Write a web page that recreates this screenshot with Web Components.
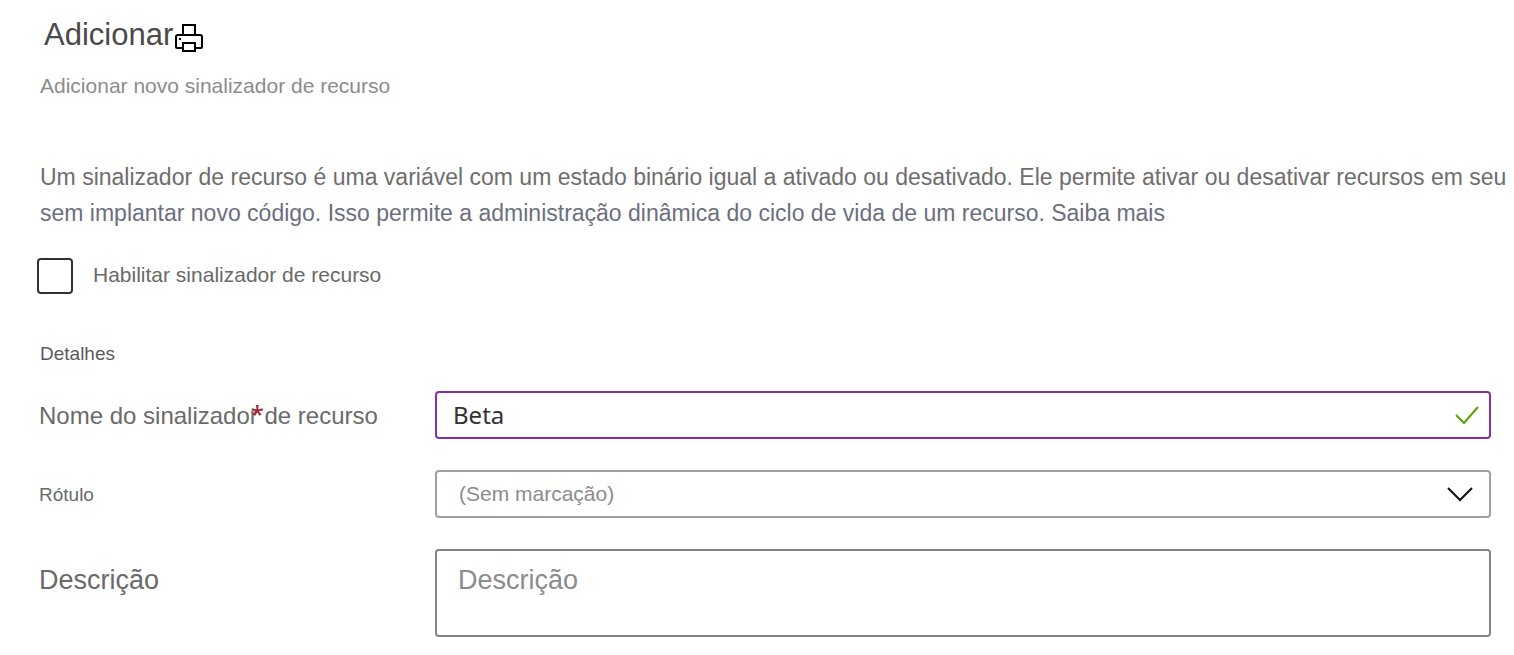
<!DOCTYPE html>
<html lang="pt">
<head>
<meta charset="utf-8">
<meta name="viewport" content="width=device-width, initial-scale=1">
<title>Adicionar</title>
<style>
body { margin: 0; background: #fff; font-family: "Liberation Sans", Arial, sans-serif; }
</style>
</head>
<body>
<feature-flag-page></feature-flag-page>
<script>
const define = (name, html) => {
  const template = document.createElement('template');
  template.innerHTML = html;
  customElements.define(name, class extends HTMLElement {
    constructor() {
      super();
      this.attachShadow({ mode: 'open' }).append(template.content.cloneNode(true));
    }
  });
};

define('page-header', `
<style>
:host { display: block; }
.title { display: flex; align-items: center; padding-left: 4px; }
h1 { margin: 0; font-size: 31px; line-height: 36px; font-weight: 400; color: #4a4a4a; }
button { display: block; padding: 0; border: 0; background: none; margin-top: 6px; }
svg { display: block; width: 31px; height: 30px; }
p { margin: 0; padding-top: 21px; font-size: 21px; line-height: 24px; color: #8c8c8c; }
</style>
<div class="title">
  <h1><slot name="title"></slot></h1>
  <button type="button" aria-label="Imprimir">
    <svg viewBox="-1 0 31 30" fill="#fff" stroke="#000" stroke-width="2">
      <path d="M9 12V2h12v10"/>
      <path d="M9 25H3Q2 25 2 24V14Q2 12 4 12H26Q28 12 28 14V24Q28 25 27 25H21"/>
      <path d="M9 20h12v8H9z"/>
      <path d="M5 16h2"/>
    </svg>
  </button>
</div>
<p><slot name="subtitle"></slot></p>`);

define('flag-intro', `
<style>
:host { display: block; font-size: 23px; line-height: 36px; color: #6e6e6e; }
p { margin: 0; white-space: nowrap; }
.rest, a { color: #6b6f7e; }
a { text-decoration: none; }
</style>
<p>Um sinalizador de recurso é uma variável com um estado binário igual a ativado ou desativado. Ele permite ativar ou desativar recursos em seu<br><span class="rest">sem implantar novo código. Isso permite a administração dinâmica do ciclo de vida de um recurso. <a href="#">Saiba mais</a></span></p>`);

define('check-option', `
<style>
:host { display: block; }
label { display: flex; align-items: center; gap: 20px; font-size: 21px; line-height: 24px; color: #696969; }
span { padding-bottom: 2px; }
input { appearance: none; box-sizing: border-box; width: 36px; height: 36px; margin: 0; border: 2px solid #323130; border-radius: 4px; background: #fff; }
input:checked { background: #8a2da5; }
</style>
<label><input type="checkbox"><span><slot></slot></span></label>`);

const field = `
:host { display: grid; grid-template-columns: 396px minmax(0, 1fr); align-items: center; color: #6a6a6a; }
label { line-height: 32px; }
.box { position: relative; display: flex; }
input, select, textarea { appearance: none; box-sizing: border-box; width: 100%; margin: 0; border: 2px solid #a0a0a0; border-radius: 4px; background: #fff; font-family: inherit; outline: 0; }
svg { position: absolute; top: 0; height: 48px; fill: none; pointer-events: none; }
`;

define('name-field', `
<style>${field}
label { font-size: 24px; padding-top: 2px; }
.mark { position: relative; }
.mark b { position: absolute; left: 100%; top: 0; margin-left: -7px; font: 500 24px/24px "Noto Sans", sans-serif; color: #a4262c; }
input { height: 48px; padding: 0 56px 2px 16px; border-color: #8a2da5; font: 24px/32px "Noto Sans", sans-serif; color: #323130; }
svg { right: 12px; width: 24px; }
</style>
<label for="name">Nome do <span class="mark">sinalizador<b>*</b></span> de recurso</label>
<div class="box"><input id="name" type="text" value="Beta" required>
<svg viewBox="0 0 24 48" stroke="#57a300" stroke-width="2"><path d="M1 24l8 8L23 16"/></svg></div>`);

define('label-field', `
<style>${field}
label { font-size: 19px; padding-top: 2px; }
select { height: 48px; padding: 0 56px 2px 22px; font-size: 21px; color: #8c8c8c; }
svg { right: 17px; width: 28px; }
</style>
<label for="tag">Rótulo</label>
<div class="box"><select id="tag"><option>(Sem marcação)</option></select>
<svg viewBox="0 0 28 48" stroke="#111" stroke-width="2"><path d="M2 18l12 12L26 18"/></svg></div>`);

define('description-field', `
<style>${field}
:host { align-items: start; }
label { font-size: 27px; padding-top: 15px; }
textarea { display: block; height: 88px; padding: 13px 21px; border-color: #858585; font-size: 27px; line-height: 32px; resize: none; }
textarea::placeholder { color: #8c8c8c; opacity: 1; }
</style>
<label for="text">Descrição</label>
<div class="box"><textarea id="text" placeholder="Descrição"></textarea></div>`);

define('feature-flag-page', `
<style>
:host { display: block; }
main { padding: 17px 0 16px 40px; }
flag-intro { margin-top: 61px; }
check-option { margin: 27px 0 0 -3px; }
form { padding-right: 23px; }
h2 { margin: 48px 0 0; font-size: 19px; line-height: 24px; font-weight: 400; color: #5a5a5e; }
.fields { display: grid; gap: 31px; margin: 25px 0 0 -1px; }
</style>
<main>
  <page-header><span slot="title">Adicionar</span><span slot="subtitle">Adicionar novo sinalizador de recurso</span></page-header>
  <flag-intro></flag-intro>
  <form>
    <check-option>Habilitar sinalizador de recurso</check-option>
    <h2>Detalhes</h2>
    <div class="fields">
      <name-field></name-field>
      <label-field></label-field>
      <description-field></description-field>
    </div>
  </form>
</main>`);
</script>
</body>
</html>
